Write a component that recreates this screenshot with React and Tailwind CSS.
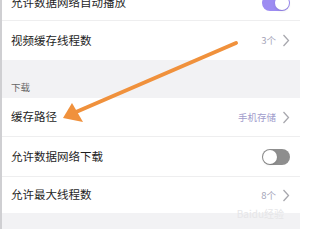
import React from "react";

const Chevron = () => (
    <svg width="8" height="13" viewBox="0 0 8 13" className="ml-[6px]">
        <path d="M1.5 1 L6.5 6.5 L1.5 12" fill="none" stroke="#a8a8ae" strokeWidth="1.3" />
    </svg>
);

const Toggle = ({ on }) => (
    <div
        className={`w-[28px] h-[16px] rounded-full flex items-center px-[1px] ${
            on ? "bg-[#9d8cf2] justify-end" : "bg-[#8e8e8e] justify-start"
        }`}
    >
        <div className="w-[14px] h-[14px] rounded-full bg-white shadow-sm" />
    </div>
);

const Row = ({ label, value, valueColor, toggle, height }) => (
    <div className={`flex items-center justify-between pl-[9px] pr-[10px] bg-white ${height}`}>
        <span className="text-[11.5px] text-[#1e1e1e]">{label}</span>
        {toggle !== undefined ? (
            <Toggle on={toggle} />
        ) : (
            <div className="flex items-center">
                <span className={`text-[9.5px] ${valueColor}`}>{value}</span>
                <Chevron />
            </div>
        )}
    </div>
);

export default function App() {
    return (
        <div
            className="relative w-[300px] h-[229px] overflow-hidden bg-[#f2f2f4] border-l-2 border-[#cfcfd2]"
            style={{ fontFamily: '"Noto Sans CJK SC", "Noto Sans", sans-serif' }}
        >
            <div className="-mt-[15px]">
                <Row label="允许数据网络自动播放" toggle={true} height="h-[35px]" />
                <div className="h-px bg-[#eeeeef]" />
                <Row label="视频缓存线程数" value="3个" valueColor="text-[#a4a4b8]" height="h-[39px]" />

                <div className="h-[38px] flex items-end pl-[9px] pb-[4px]">
                    <span className="text-[9.5px] text-[#666]">下载</span>
                </div>

                <Row label="缓存路径" value="手机存储" valueColor="text-[#9f9ccc]" height="h-[38px]" />
                <div className="h-px bg-[#eeeeef]" />
                <Row label="允许数据网络下载" toggle={false} height="h-[39px]" />
                <div className="h-px bg-[#eeeeef]" />
                <Row label="允许最大线程数" value="8个" valueColor="text-[#a4a4b8]" height="h-[36px]" />
            </div>

            <span className="absolute right-[16px] bottom-[8px] text-[10px] text-[#e6e6e8]">Baidu经验</span>

            {/* orange annotation arrow */}
            <svg className="absolute left-0 top-0" width="300" height="229" viewBox="0 0 300 229">
                <line x1="234" y1="43" x2="74" y2="112" stroke="#f0913c" strokeWidth="4" strokeLinecap="round" />
                <polygon points="61,118 70,103 81,122" fill="#f0913c" />
            </svg>
        </div>
    );
}
